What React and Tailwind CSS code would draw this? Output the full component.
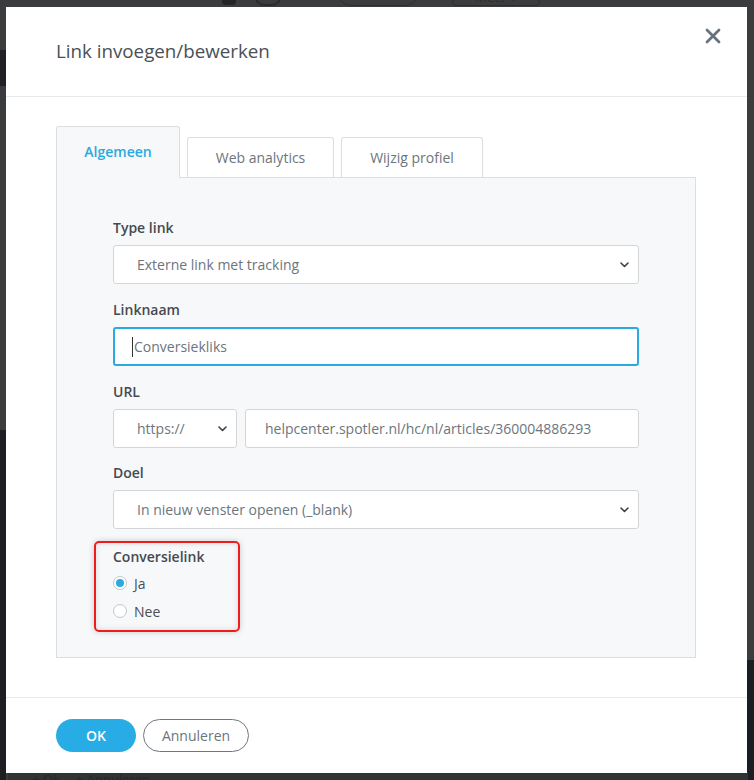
import React from "react";

const Chevron = () => (
    <svg width="9" height="6" viewBox="0 0 9 6" fill="none" stroke="#3d4247" strokeWidth="1.6" strokeLinecap="round" strokeLinejoin="round">
        <path d="M1 1l3.5 3.5L8 1" />
    </svg>
);

const SelectBox = ({ value, className = "" }) => (
    <div className={`flex h-[39px] items-center justify-between rounded-[3px] border border-[#d3d6d9] bg-white pl-[23px] pr-[9px] text-[14px] text-[#6c757d] ${className}`}>
        <span>{value}</span>
        <Chevron />
    </div>
);

const Label = ({ children }) => (
    <div className="h-[20px] text-[14px] font-semibold leading-[20px] text-[#454a50]">{children}</div>
);

const Radio = ({ checked, label }) => (
    <div className="flex h-[28px] items-center gap-[7px]">
        <span className="flex h-[14px] w-[14px] items-center justify-center rounded-full border border-[#c4c7ca] bg-white">
            {checked && <span className="h-[8px] w-[8px] rounded-full bg-[#29abe2]" />}
        </span>
        <span className="text-[14px] text-[#4a4f55]">{label}</span>
    </div>
);

export default function App() {
    return (
        <div className="relative h-[780px] w-[754px] overflow-hidden bg-[#3b3c3d] font-['Open_Sans',sans-serif]">
            {/* page behind the overlay */}
            <div className="absolute left-[222px] top-[-8px] h-[13px] w-[14px] rounded-sm bg-[#242526]" />
            <div className="absolute left-[255px] top-[-12px] h-[18px] w-[26px] rounded-full border-2 border-[#2a2b2c]" />
            <div className="absolute left-[338px] top-[-20px] h-[26px] w-[80px] rounded-full border border-[#2e2f30]" />
            <div className="absolute left-[452px] top-[-20px] flex h-[26px] w-[88px] items-end justify-center rounded-[4px] border border-[#2e2f30] pb-[1px] text-[13px] leading-none text-[#2c2d2e]">
                Meer ▾
            </div>
            <div className="absolute left-0 top-[50px] h-[36px] w-[6px] bg-[#1f2124]" />
            <div className="absolute left-0 top-[430px] h-[350px] w-[6px] bg-[#1d1f22]" />
            <div className="absolute right-0 top-[660px] h-[120px] w-[7px] bg-[#1b1e23]" />
            <div className="absolute bottom-0 left-[8px] flex h-[8px] w-[740px] items-start gap-4 bg-[#303234] pl-[24px] text-[13px] leading-[14px] text-[#25272a]">
                <span>+ Ok</span>
                <span>+ Annuleren</span>
            </div>

            {/* dialog */}
            <div className="absolute left-[6px] top-[7px] flex h-[766px] w-[741px] flex-col bg-white">
                <div className="flex h-[90px] items-start justify-between border-b border-[#e9eaeb] pl-[50px] pr-[25px]">
                    <h2 className="pt-[31px] text-[18.75px] leading-[26px] text-[#4a5056]">Link invoegen/bewerken</h2>
                    <button className="mt-[20px] p-[1px]">
                        <svg width="16" height="16" viewBox="0 0 16 16" fill="none" stroke="#66737d" strokeWidth="2.8" strokeLinecap="round">
                            <path d="M2 2l12 12M14 2L2 14" />
                        </svg>
                    </button>
                </div>

                <div className="pl-[50px] pr-[51px] pt-[29px]">
                    <div className="flex items-end gap-[7px]">
                        <div className="relative z-10 -mb-px flex h-[52px] w-[124px] items-center justify-center rounded-t-[3px] border border-b-0 border-[#dcdee0] bg-[#f7f8fa] pb-[2px] text-[14px] font-semibold text-[#29a9e0]">
                            Algemeen
                        </div>
                        <div className="flex h-[40px] w-[147px] items-center justify-center rounded-t-[3px] border border-b-0 border-[#dcdee0] bg-white text-[14px] text-[#6c757d]">
                            Web analytics
                        </div>
                        <div className="flex h-[40px] w-[142px] items-center justify-center rounded-t-[3px] border border-b-0 border-[#dcdee0] bg-white text-[14px] text-[#6c757d]">
                            Wijzig profiel
                        </div>
                    </div>

                    <div className="h-[481px] border border-[#dcdee0] bg-[#f7f8fa] px-[56px] pt-[40px]">
                        <Label>Type link</Label>
                        <SelectBox value="Externe link met tracking" className="mt-[7px]" />

                        <div className="mt-[16px]">
                            <Label>Linknaam</Label>
                            <div className="mt-[7px] flex h-[39px] items-center rounded-[3px] border-2 border-[#29abe2] bg-white pl-[17px] text-[14px] text-[#6c757d]">
                                <span className="mr-[1px] h-[20px] w-px bg-[#333]" />
                                Conversiekliks
                            </div>
                        </div>

                        <div className="mt-[16px]">
                            <Label>URL</Label>
                            <div className="mt-[7px] flex gap-[8px]">
                                <SelectBox value="https://" className="w-[124px]" />
                                <div className="flex h-[39px] flex-1 items-center rounded-[3px] border border-[#d3d6d9] bg-white pl-[19px] text-[14px] text-[#6c757d]">
                                    helpcenter.spotler.nl/hc/nl/articles/360004886293
                                </div>
                            </div>
                        </div>

                        <div className="mt-[15px]">
                            <Label>Doel</Label>
                            <SelectBox value="In nieuw venster openen (_blank)" className="mt-[7px]" />
                        </div>

                        <div className="relative mt-[18px]">
                            <div className="absolute left-[-19px] top-[-6px] h-[91px] w-[146px] rounded-[5px] border-2 border-[#f01c1c] shadow-[0_0_6px_rgba(0,0,0,0.18),inset_0_0_6px_rgba(0,0,0,0.12)]" />
                            <Label>Conversielink</Label>
                            <div className="mt-[2px]">
                                <Radio checked label="Ja" />
                                <Radio label="Nee" />
                            </div>
                        </div>
                    </div>
                </div>

                <div className="mt-[39px] flex gap-[7px] border-t border-[#e9eaeb] pl-[50px] pt-[21px]">
                    <button className="h-[33px] w-[80px] rounded-full bg-[#27ace5] text-[14px] font-semibold text-white">OK</button>
                    <button className="h-[33px] w-[106px] rounded-full border border-[#6f777e] bg-white text-[14px] text-[#6c757d]">Annuleren</button>
                </div>
            </div>
        </div>
    );
}
